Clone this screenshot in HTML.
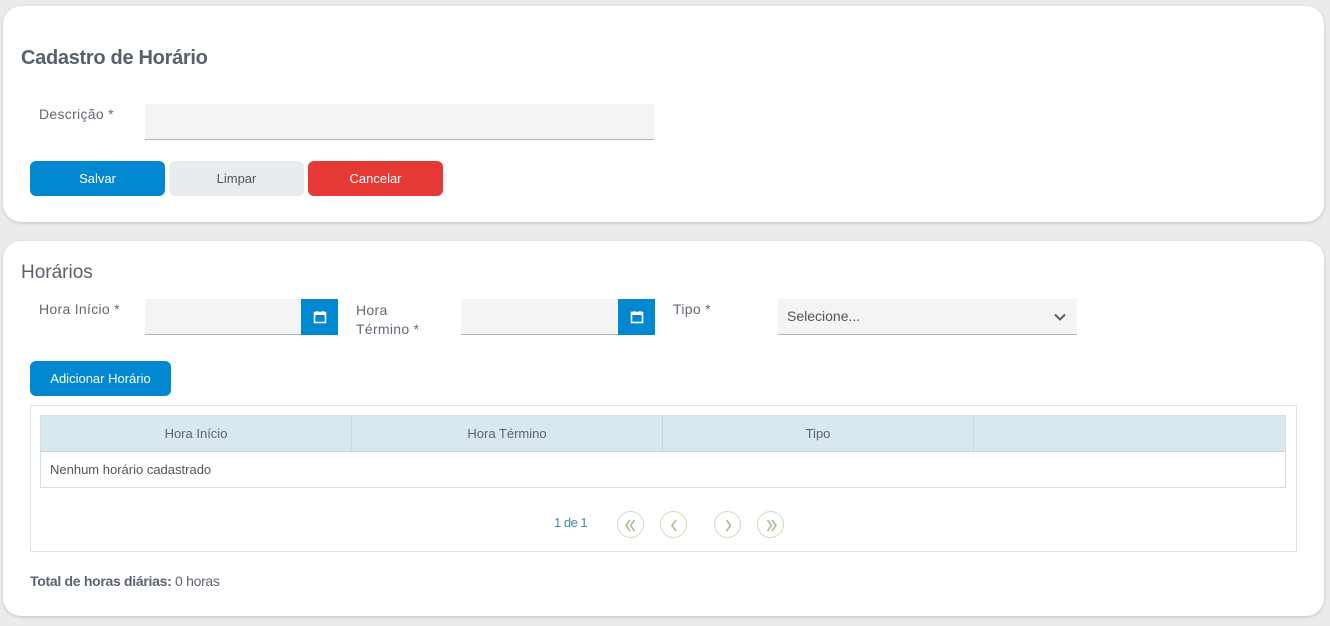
<!DOCTYPE html>
<html><head><meta charset="utf-8"><style>
*{box-sizing:border-box;margin:0;padding:0}
body{width:1330px;height:626px;background:#ebebeb;font-family:"Liberation Sans",Arial,sans-serif;position:relative;overflow:hidden;color:#5a6470}
.card{position:absolute;left:3px;width:1321px;background:#fff;border-radius:18px;box-shadow:0 1px 3px rgba(0,0,0,.18)}
.a{position:absolute}
.lbl{font-size:14px;color:#606a74;letter-spacing:.3px}
.inp{position:absolute;background:#f4f4f4;border-bottom:1px solid #a9b6c0}
.btn{position:absolute;border-radius:6px;font-size:13px;text-align:center;line-height:35px;height:35px}
.cal{position:absolute;background:#0288d1;width:37px;height:36px}
.th{position:absolute;top:0;height:36px;line-height:36px;text-align:center;font-size:13px;color:#5a6470;border-right:1px solid #c8d6df}
.pg{position:absolute;top:511px;width:27px;height:27px;border:1px solid #cfdcbd;border-radius:50%}
.pg svg{position:absolute;left:0;top:0}
</style></head><body>
<div class="card" style="top:6px;height:216px"></div>
<div class="card" style="top:241px;height:375px"></div>

<div class="a" style="left:21px;top:47px;font-size:20px;font-weight:bold;color:#56616c;letter-spacing:-0.3px">Cadastro de Horário</div>
<div class="a lbl" style="left:39px;top:106px">Descrição *</div>
<div class="inp" style="left:145px;top:104px;width:509px;height:36px"></div>
<div class="btn" style="left:30px;top:161px;width:135px;background:#0288d1;color:#fff">Salvar</div>
<div class="btn" style="left:169px;top:161px;width:135px;background:#e9ecef;color:#555">Limpar</div>
<div class="btn" style="left:308px;top:161px;width:135px;background:#e53935;color:#fff">Cancelar</div>

<div class="a" style="left:21px;top:262px;font-size:19px;color:#56616c">Horários</div>
<div class="a lbl" style="left:39px;top:301px">Hora Início *</div>
<div class="inp" style="left:145px;top:299px;width:160px;height:36px"></div>
<div class="cal" style="left:301px;top:299px"><svg width="37" height="36" viewBox="0 0 37 36"><rect x="13.5" y="13.5" width="11" height="10" fill="none" stroke="#fff" stroke-width="1.6"/><rect x="13.5" y="13.5" width="11" height="2.5" fill="#fff"/><path d="M16 12v2M22 12v2" stroke="#fff" stroke-width="1.4"/></svg></div>
<div class="a lbl" style="left:356px;top:301px;line-height:19px">Hora<br>Término *</div>
<div class="inp" style="left:461px;top:299px;width:160px;height:36px"></div>
<div class="cal" style="left:618px;top:299px"><svg width="37" height="36" viewBox="0 0 37 36"><rect x="13.5" y="13.5" width="11" height="10" fill="none" stroke="#fff" stroke-width="1.6"/><rect x="13.5" y="13.5" width="11" height="2.5" fill="#fff"/><path d="M16 12v2M22 12v2" stroke="#fff" stroke-width="1.4"/></svg></div>
<div class="a lbl" style="left:673px;top:301px">Tipo *</div>
<div class="inp" style="left:778px;top:299px;width:299px;height:36px;font-size:14px;color:#555;padding:9px 0 0 9px">Selecione...</div>
<svg class="a" style="left:1053px;top:312px" width="14" height="10" viewBox="0 0 14 10"><path d="M2 2.5l5 5 5-5" fill="none" stroke="#56616c" stroke-width="2"/></svg>
<div class="btn" style="left:30px;top:361px;width:141px;background:#0288d1;color:#fff">Adicionar Horário</div>

<div class="a" style="left:30px;top:405px;width:1267px;height:147px;border:1px solid #dde2e6"></div>
<div class="a" style="left:40px;top:415px;width:1246px;height:73px;border:1px solid #d4dde3">
 <div class="a" style="left:0;top:0;width:1244px;height:36px;background:#d9e7ef;border-bottom:1px solid #c8d6df"></div>
 <div class="th" style="left:0;width:311px">Hora Início</div>
 <div class="th" style="left:311px;width:311px">Hora Término</div>
 <div class="th" style="left:622px;width:311px">Tipo</div>
 <div class="a" style="left:9px;top:46px;font-size:13px;color:#555">Nenhum horário cadastrado</div>
</div>
<div class="a" style="left:554px;top:515px;font-size:13px;color:#3f8c9a;letter-spacing:-0.5px">1 de 1</div>
<div class="pg" style="left:617px"><svg width="27" height="27"><path d="M12 8l-4 5.5 4 5.5M16.5 8l-4 5.5 4 5.5" fill="none" stroke="#a6bf90" stroke-width="1.6"/></svg></div>
<div class="pg" style="left:660px"><svg width="27" height="27"><path d="M15 8l-4 5.5 4 5.5" fill="none" stroke="#a6bf90" stroke-width="1.6"/></svg></div>
<div class="pg" style="left:714px"><svg width="27" height="27"><path d="M11.5 8l4 5.5-4 5.5" fill="none" stroke="#a6bf90" stroke-width="1.6"/></svg></div>
<div class="pg" style="left:757px"><svg width="27" height="27"><path d="M9.5 8l4 5.5-4 5.5M14 8l4 5.5-4 5.5" fill="none" stroke="#a6bf90" stroke-width="1.6"/></svg></div>
<div class="a" style="left:30px;top:573px;font-size:14px;color:#5a6470;letter-spacing:-0.3px"><b>Total de horas diárias:</b> 0 horas</div>
</body></html>
